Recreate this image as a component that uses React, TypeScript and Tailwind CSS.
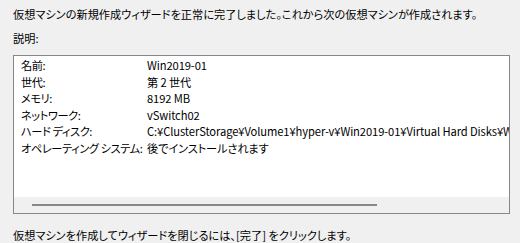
const rows: [string, string][] = [
  ['名前:', 'Win2019-01'],
  ['世代:', '第 2 世代'],
  ['メモリ:', '8192 MB'],
  ['ネットワーク:', 'vSwitch02'],
  ['ハード ディスク:', 'C:¥ClusterStorage¥Volume1¥hyper-v¥Win2019-01¥Virtual Hard Disks¥Win2019-01.vhdx'],
  ['オペレーティング システム:', '後でインストールされます'],
]

const font = "font-['Noto_Sans_CJK_JP',sans-serif] [font-feature-settings:'palt']"

export default function App() {
  return (
    <div className={`w-[520px] h-[243px] bg-[#f0f0f0] text-[11.2px] text-black overflow-hidden ${font}`}>
      <div className="pl-[13px] pt-[6px] h-[23px] leading-[16px]">
        仮想マシンの新規作成ウィザードを正常に完了しました。これから次の仮想マシンが作成されます。
      </div>
      <div className="pl-[13px] mt-[7px] h-[16px] leading-[16px]">説明:</div>
      <div className="ml-[13px] mt-[9px] w-[497px] h-[159px] border border-[#828790] bg-white flex flex-col">
        <div className="flex-1 overflow-hidden pt-[1px] pl-[7px]">
          {rows.map(([k, v]) => (
            <div key={k} className="flex h-[16.6px] leading-[16.6px] whitespace-nowrap">
              <div className="w-[126px] shrink-0 tracking-[-0.4px]">{k}</div>
              <div className="tracking-[-0.1px]">{v}</div>
            </div>
          ))}
        </div>
        <div className="h-[16px] bg-[#f0f0f0] flex items-center pl-[18px]">
          <div className="w-[345px] h-[2px] bg-[#888888]" />
        </div>
      </div>
      <div className="pl-[13px] mt-[13px] h-[16px] leading-[16px]">
        仮想マシンを作成してウィザードを閉じるには、[完了] をクリックします。
      </div>
    </div>
  )
}
